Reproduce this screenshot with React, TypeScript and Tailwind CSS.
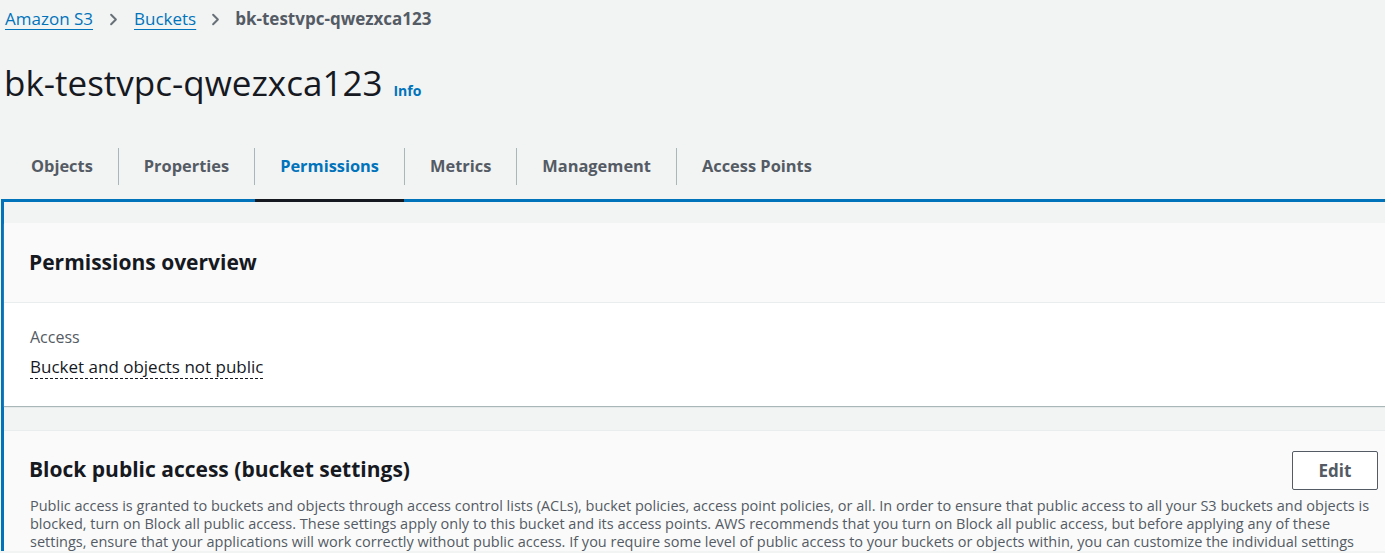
import React from "react";
import { ChevronRight } from "lucide-react";

const tabs = ["Objects", "Properties", "Permissions", "Metrics", "Management", "Access Points"];

const descLines = [
  "Public access is granted to buckets and objects through access control lists (ACLs), bucket policies, access point policies, or all. In order to ensure that public access to all your S3 buckets and objects is",
  "blocked, turn on Block all public access. These settings apply only to this bucket and its access points. AWS recommends that you turn on Block all public access, but before applying any of these",
  "settings, ensure that your applications will work correctly without public access. If you require some level of public access to your buckets or objects within, you can customize the individual settings",
];

export default function App() {
  return (
    <div
      className="w-[1385px] h-[553px] overflow-hidden bg-[#f2f3f3] text-[#16191f]"
      style={{ fontFamily: '"Open Sans", "Noto Sans", sans-serif' }}
    >
      {/* breadcrumbs */}
      <nav className="flex items-center pl-[5px] h-[38px] text-[17px]">
        <a className="text-[#0073bb] underline underline-offset-[4px] decoration-1">Amazon S3</a>
        <ChevronRight className="mx-[11px] h-[19px] w-[19px] text-[#687078]" strokeWidth={2.5} />
        <a className="text-[#0073bb] underline underline-offset-[4px] decoration-1">Buckets</a>
        <ChevronRight className="mx-[10px] h-[19px] w-[19px] text-[#687078]" strokeWidth={2.5} />
        <span className="font-bold text-[#545b64]">bk-testvpc-qwezxca123</span>
      </nav>

      {/* title */}
      <div className="flex items-baseline pl-[4px] pt-[23px] h-[92px]">
        <h1 className="text-[35px] leading-[44px] font-normal">bk-testvpc-qwezxca123</h1>
        <span className="ml-[11px] text-[14px] font-bold text-[#0073bb]">Info</span>
      </div>

      {/* tabs */}
      <div className="relative z-10 flex h-[72px] pl-[6px]">
        {tabs.map((t, i) => (
          <div key={t} className="flex items-center">
            {i > 0 && <div className="h-[37px] w-px bg-[#aab7b8]" />}
            <div
              className={`h-full flex items-center px-[25px] pt-[3px] border-b-[3px] text-[16.4px] font-bold ${
                t === "Permissions" ? "text-[#0073bb] border-[#16191f]" : "text-[#545b64] border-transparent"
              }`}
            >
              {t}
            </div>
          </div>
        ))}
      </div>

      {/* tab content with focus ring */}
      <div className="-mt-[3px] ml-[1px] border-l-[3px] border-t-[3px] border-[#0073bb] pt-[21px]">
        <section className="bg-white shadow-[0_1px_1px_0_#aab7b8]">
          <div className="bg-[#fafafa] h-[80px] flex items-center px-[25px] border-b border-[#eaeded]">
            <h2 className="text-[21px] font-bold">Permissions overview</h2>
          </div>
          <div className="px-[26px] pt-[23px] pb-[28px]">
            <div className="text-[16px] text-[#545b64] leading-[22px]">Access</div>
            <div className="mt-[8px] text-[17px] leading-[22px]">
              <span className="border-b border-dashed border-[#16191f]">Bucket and objects not public</span>
            </div>
          </div>
        </section>

        <section className="mt-[24px] bg-[#fafafa] border-t border-[#eaeded]">
          <div className="flex items-start justify-between pl-[25px] pr-[7px] pt-[20px]">
            <h2 className="text-[21px] leading-[28px] font-bold mt-[4px]">Block public access (bucket settings)</h2>
            <button className="h-[39px] w-[86px] rounded-[2px] border border-[#545b64] bg-white text-[17px] font-bold text-[#545b64]">
              Edit
            </button>
          </div>
          <div className="pl-[26px] pt-[7px] text-[14.5px] leading-[18px] text-[#545b64]">
            {descLines.map((l, i) => (
              <div key={i} className="whitespace-nowrap">{l}</div>
            ))}
          </div>
        </section>
      </div>
    </div>
  );
}
